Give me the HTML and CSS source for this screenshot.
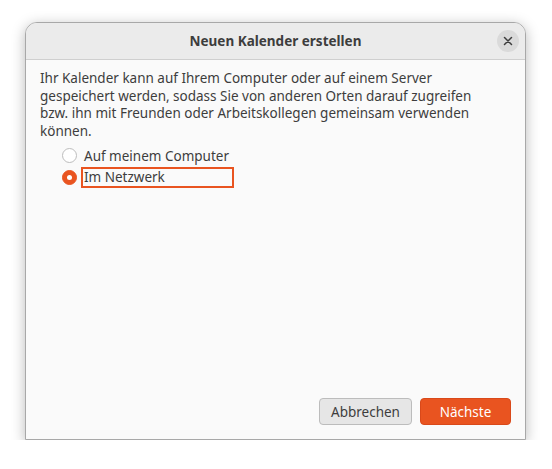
FILE: index.html
```html
<!DOCTYPE html>
<html lang="de">
<head>
<meta charset="utf-8">
<title>Neuen Kalender erstellen</title>
<link rel="stylesheet" href="styles.css">
</head>
<body>
<div class="window">
  <header class="titlebar">
    <div class="title">Neuen Kalender erstellen</div>
    <button class="close" aria-label="Schließen">
      <svg width="10" height="10" viewBox="0 0 10 10"><path d="M1.5 1.5 L8.5 8.5 M8.5 1.5 L1.5 8.5" stroke="#3d3d3d" stroke-width="1.5" stroke-linecap="round" fill="none"/></svg>
    </button>
  </header>
  <main class="content">
    <p class="desc">Ihr Kalender kann auf Ihrem Computer oder auf einem Server gespeichert werden, sodass Sie von anderen Orten darauf zugreifen bzw. ihn mit Freunden oder Arbeitskollegen gemeinsam verwenden können.</p>
    <div class="options">
      <label class="option">
        <span class="radio"></span>
        <span class="label">Auf meinem Computer</span>
      </label>
      <label class="option">
        <span class="radio checked"></span>
        <span class="label focused">Im Netzwerk</span>
      </label>
    </div>
  </main>
  <footer class="actions">
    <button class="btn">Abbrechen</button>
    <button class="btn primary">Nächste</button>
  </footer>
</div>
</body>
</html>
```
FILE: styles.css
```css
* { box-sizing: border-box; }
html, body {
  margin: 0;
  padding: 0;
  background: #ffffff;
}
body {
  font-family: "Noto Sans", "Open Sans", sans-serif;
  color: #3d3d3d;
  padding: 22px 0 0 25px;
}
.window {
  width: 501px;
  height: 418px;
  background: #fafafa;
  border: 1px solid #a8a8a8;
  border-radius: 12px 12px 0 0;
  box-shadow: 0 3px 14px rgba(0, 0, 0, 0.28);
  display: flex;
  flex-direction: column;
  overflow: hidden;
}
.titlebar {
  height: 37px;
  flex: none;
  background: #ebebeb;
  border-bottom: 1px solid #cfcfcf;
  display: flex;
  align-items: center;
  justify-content: center;
  position: relative;
}
.title {
  font-weight: 700;
  font-size: 13.5px;
  color: #3d3d3d;
}
.close {
  position: absolute;
  right: 6px;
  top: 7px;
  width: 22px;
  height: 22px;
  border-radius: 50%;
  border: none;
  background: #dadada;
  padding: 0;
  display: flex;
  align-items: center;
  justify-content: center;
}
.content {
  flex: 1;
  padding: 10px 32px 0 14px;
}
.desc {
  margin: 0;
  font-size: 13.5px;
  line-height: 17.5px;
}
.options {
  display: flex;
  flex-direction: column;
  gap: 0;
  padding: 5px 0 0 22px;
}
.option {
  display: flex;
  align-items: center;
  gap: 4px;
  height: 21.5px;
  font-size: 13.5px;
}
.radio {
  width: 15px;
  height: 15px;
  border-radius: 50%;
  border: 1px solid #bdbdbd;
  background: #ffffff;
  flex: none;
  display: flex;
  align-items: center;
  justify-content: center;
}
.radio.checked {
  background: #e95420;
  border-color: #e95420;
}
.radio.checked::after {
  content: "";
  width: 5px;
  height: 5px;
  border-radius: 50%;
  background: #ffffff;
}
.label {
  height: 21px;
  display: flex;
  align-items: center;
  padding: 0 1px;
  border: 2px solid transparent;
}
.label.focused {
  border-color: #e95420;
  width: 153px;
}
.actions {
  flex: none;
  display: flex;
  justify-content: flex-end;
  gap: 8px;
  padding: 0 14px 14px 0;
}
.btn {
  height: 27px;
  border-radius: 4px;
  font-family: "Noto Sans", "Open Sans", sans-serif;
  font-size: 13.5px;
  color: #3d3d3d;
  background: #e6e6e6;
  border: 1px solid #bcbcbc;
  width: 93px;
  padding: 0;
}
.btn.primary {
  width: 91px;
  background: #e95420;
  border-color: #d9491a;
  color: #ffffff;
}
```
